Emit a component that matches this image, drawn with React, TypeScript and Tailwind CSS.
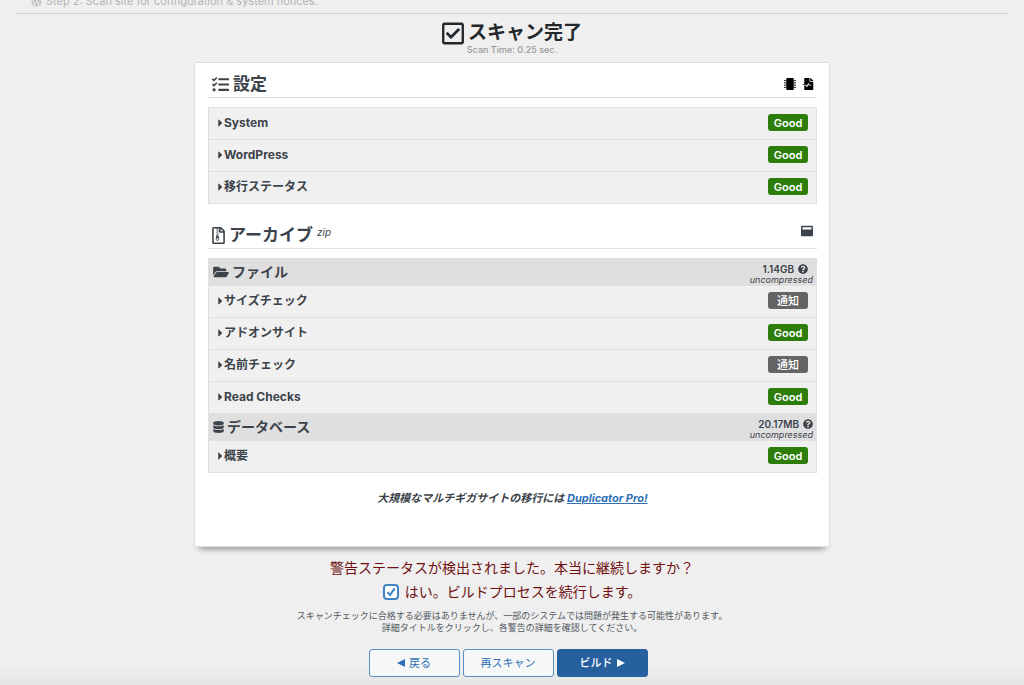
import type { ReactNode } from "react";
import {
  FaCaretRight,
  FaDatabase,
  FaFileMedicalAlt,
  FaFolderOpen,
  FaMicrochip,
  FaQuestionCircle,
  FaRegCheckSquare,
  FaRegFileArchive,
  FaTasks,
  FaWindowMaximize,
  FaWordpress,
} from "react-icons/fa";

type Status = "good" | "notice";

function Badge({ status }: { status: Status }) {
  return status === "good" ? (
    <span className="flex h-[17px] w-10 items-center justify-center rounded-[3px] bg-[#2d7d0b] text-[11px] leading-4 font-semibold text-white">
      Good
    </span>
  ) : (
    <span className="flex h-[17px] w-10 items-center justify-center rounded-[3px] bg-[#646464] text-[11px] leading-4 font-medium text-white">
      通知
    </span>
  );
}

function CheckRow({ label, status }: { label: string; status: Status }) {
  return (
    <button
      type="button"
      className="flex h-8 w-full items-center border-b border-[#dfdfdf] bg-[#f0f0f0] px-2 pb-0.5 text-left last:h-[31px] last:border-b-0"
    >
      <FaCaretRight className="h-3 w-[7px] shrink-0" aria-hidden="true" />
      <span className="flex-1 text-xs leading-4 font-bold">{label}</span>
      <Badge status={status} />
    </button>
  );
}

function GroupHeader({ icon, label, size }: { icon: ReactNode; label: string; size: ReactNode }) {
  return (
    <div className="flex h-7 items-center justify-between bg-[#dfdfdf] pr-[3px] pl-1">
      <h3 className="flex items-center gap-[3px] text-sm leading-5 font-bold">
        {icon}
        {label}
      </h3>
      <div className="flex flex-col items-end pt-1 text-right">
        {size}
        <em className="text-[9px] leading-[10px]">uncompressed</em>
      </div>
    </div>
  );
}

export default function App() {
  return (
    <div className="flex min-h-screen flex-col bg-[#efefef] font-['Inter','Noto_Sans_CJK_JP',sans-serif] text-[#3c434a]">
      <header className="mx-4 flex h-3.5 items-end overflow-hidden border-b border-[#d2d2d2] pb-1 pl-[15px]">
        <p className="flex items-center gap-1 text-[11px] leading-4 text-[#b4b4b4]">
          <FaWordpress className="h-[11px] w-[11px]" aria-hidden="true" />
          Step 2: Scan site for configuration &amp; system notices.
        </p>
      </header>

      <div className="flex flex-col items-center pt-2">
        <h1 className="flex h-[22px] items-center gap-1 text-[19px] leading-6 font-bold text-[#23282d]">
          <FaRegCheckSquare className="h-[25px] w-[22px]" aria-hidden="true" />
          スキャン完了
        </h1>
        <p className="text-[9px] leading-3 font-medium text-[#999999]">Scan Time: 0.25 sec.</p>
      </div>

      <main className="mx-auto mt-1.5 w-full max-w-[636px] rounded-[3px] border border-[#dfdfdf] bg-white pr-3 pb-10 pl-[13px] shadow-[0_7px_6px_-5px_rgba(0,0,0,0.4)]">
        <section>
          <div className="flex h-[35px] items-center justify-between border-b border-[#dfdfdf] pt-2 pr-[3px] pl-1">
            <h2 className="flex items-center gap-1 text-[17px] leading-6 font-bold">
              <FaTasks className="h-[17px] w-[17px]" aria-hidden="true" />
              設定
            </h2>
            <div className="flex items-center gap-1.5 text-black">
              <button type="button" aria-label="System info">
                <FaMicrochip className="h-3 w-3" />
              </button>
              <button type="button" aria-label="Scan report">
                <FaFileMedicalAlt className="h-3 w-3" />
              </button>
            </div>
          </div>
          <div className="mt-[9px] border border-[#dfdfdf]">
            <CheckRow label="System" status="good" />
            <CheckRow label="WordPress" status="good" />
            <CheckRow label="移行ステータス" status="good" />
          </div>
        </section>

        <section className="mt-4">
          <div className="flex h-[29px] items-center justify-between border-b border-[#dfdfdf] pt-0.5 pr-1 pl-1">
            <h2 className="flex items-center gap-1 text-[17px] leading-6 font-bold">
              <FaRegFileArchive className="h-[17px] w-[13px]" aria-hidden="true" />
              アーカイブ
              <em className="pb-1.5 text-[10px] leading-3 font-normal">zip</em>
            </h2>
            <button type="button" aria-label="Archive details" className="pb-2">
              <FaWindowMaximize className="h-3 w-3" />
            </button>
          </div>
          <div className="mt-[9px] border-x border-b border-[#dfdfdf]">
            <div>
              <GroupHeader
                icon={<FaFolderOpen className="h-3.5 w-4" aria-hidden="true" />}
                label="ファイル"
                size={
                  <span className="mr-[5px] flex items-center gap-1 text-[10px] leading-[11px] font-semibold">
                    1.14GB
                    <FaQuestionCircle className="h-2.5 w-2.5" aria-hidden="true" />
                  </span>
                }
              />
              <CheckRow label="サイズチェック" status="notice" />
              <CheckRow label="アドオンサイト" status="good" />
              <CheckRow label="名前チェック" status="notice" />
              <CheckRow label="Read Checks" status="good" />
            </div>
            <div>
              <GroupHeader
                icon={<FaDatabase className="h-3 w-[11px]" aria-hidden="true" />}
                label="データベース"
                size={
                  <span className="flex items-center gap-1 text-[10px] leading-[11px] font-semibold">
                    20.17MB
                    <FaQuestionCircle className="h-2.5 w-2.5" aria-hidden="true" />
                  </span>
                }
              />
              <CheckRow label="概要" status="good" />
            </div>
          </div>
        </section>

        <p className="mt-[17px] text-center text-[11px] leading-4 font-bold italic">
          大規模なマルチギガサイトの移行には{" "}
          <a href="#pro" className="text-[#2e70b8] underline">
            Duplicator Pro!
          </a>
        </p>
      </main>

      <div className="flex flex-col items-center pt-[11px] text-sm leading-5 text-[#701010]">
        <p>警告ステータスが検出されました。本当に継続しますか？</p>
        <label className="mt-1 flex items-center gap-1.5">
          <span className="grid">
            <input
              type="checkbox"
              defaultChecked
              className="peer col-start-1 row-start-1 h-4 w-4 appearance-none rounded-[4px] border-2 border-[#4083c4] bg-white"
            />
            <svg
              viewBox="0 0 16 16"
              className="pointer-events-none invisible col-start-1 row-start-1 h-4 w-4 peer-checked:visible"
              aria-hidden="true"
            >
              <path d="M4.5 8.2 7 11l4.7-6.6" fill="none" stroke="#3582c4" strokeWidth="2" />
            </svg>
          </span>
          はい。ビルドプロセスを続行します。
        </label>
        <p className="mt-2 text-center text-[9px] leading-3 text-[#50575e]">
          スキャンチェックに合格する必要はありませんが、一部のシステムでは問題が発生する可能性があります。
          <br />
          詳細タイトルをクリックし、各警告の詳細を確認してください。
        </p>
      </div>

      <div className="mt-auto flex justify-center gap-[3px] bg-linear-to-b from-[#efefef] from-60% to-[#e6e6e6] pt-3 pr-2 pb-2 text-[11px] leading-4">
        <button
          type="button"
          className="flex h-7 w-[91px] items-center justify-center gap-1 rounded-[3px] border border-[#5b8fc4] bg-[#f6f7f7] text-[#2e70b8]"
        >
          <svg viewBox="0 0 8 8" className="h-2 w-2" aria-hidden="true">
            <path d="M8 0v8L0 4z" fill="currentColor" />
          </svg>
          戻る
        </button>
        <button
          type="button"
          className="flex h-7 w-[91px] items-center justify-center rounded-[3px] border border-[#5b8fc4] bg-[#f6f7f7] text-[#2e70b8]"
        >
          再スキャン
        </button>
        <button
          type="button"
          className="flex h-7 w-[91px] items-center justify-center gap-1 rounded-[3px] border border-[#27609f] bg-[#27609f] font-medium text-white"
        >
          ビルド
          <svg viewBox="0 0 8 8" className="h-2 w-2" aria-hidden="true">
            <path d="M0 0v8l8-4z" fill="currentColor" />
          </svg>
        </button>
      </div>
    </div>
  );
}
